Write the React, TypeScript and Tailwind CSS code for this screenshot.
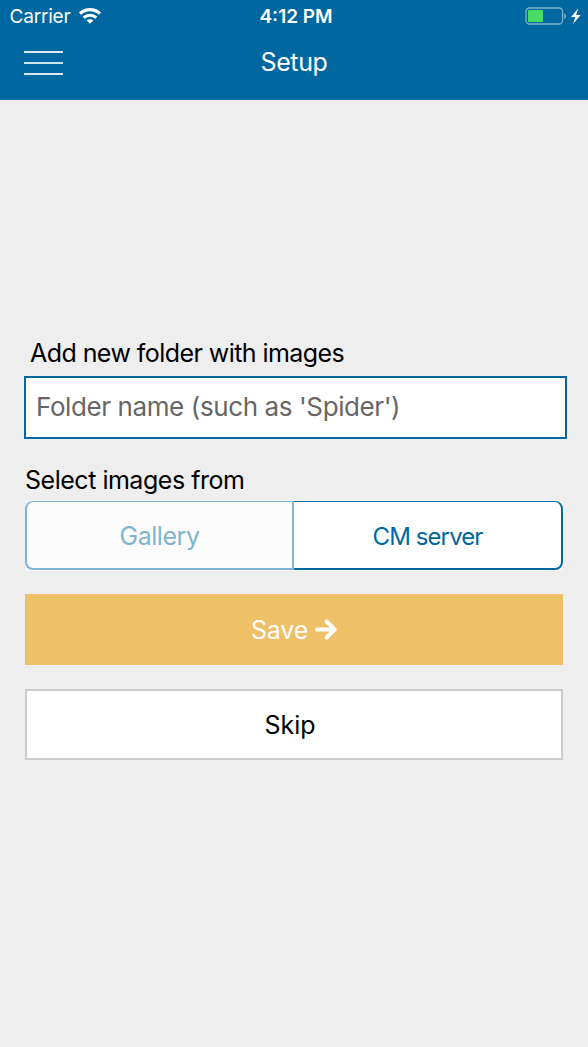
import React from "react";

function WifiIcon() {
  return (
    <svg className="ml-[9px] h-4 w-[22px]" viewBox="0 0 22 16" fill="none" stroke="#fff">
      <path d="M1 5.6C6.7.3 15.3.3 21 5.6" strokeWidth="3.2" />
      <path d="M4.7 9.6c3.6-3.3 9-3.3 12.6 0" strokeWidth="3" />
      <path d="M11 15.8 7.6 12.5c1.9-1.7 4.9-1.7 6.8 0z" fill="#fff" stroke="none" />
    </svg>
  );
}

function ArrowIcon() {
  return (
    <svg
      className="h-[21px] w-[22px]"
      viewBox="0 0 22 21"
      fill="none"
      stroke="#fff"
      strokeWidth="4"
      strokeLinecap="round"
      strokeLinejoin="round"
    >
      <path d="M2 10.5h17.5M11.6 2.4l8 8.1-8 8.1" />
    </svg>
  );
}

function StatusBar() {
  return (
    <div className="grid h-8 grid-cols-3 items-center text-white">
      <div className="flex items-center pl-[9.5px]">
        <span className="pt-0.5 text-[19px] leading-[30px] tracking-[-0.2px]">Carrier</span>
        <WifiIcon />
      </div>
      <div className="pt-0.5 pl-1 text-center text-[19px] font-semibold leading-[30px]">4:12 PM</div>
      <div className="flex items-center justify-end pr-[6px]">
        <svg className="h-[18px] w-[57px]" viewBox="0 0 57 18" fill="none">
          <rect x="1" y="1" width="36.5" height="16" rx="3.5" stroke="#7fb3d0" strokeWidth="1.3" />
          <rect x="3" y="3" width="15" height="12" rx="1" fill="#4cd964" />
          <path d="M39.2 6.2c2.4.8 2.4 4.8 0 5.6z" fill="#7fb3d0" />
          <path d="M53.3 1.2 46.1 10h4.2l-2.2 6.8L55.7 8h-4.5z" fill="#fff" />
        </svg>
      </div>
    </div>
  );
}

export default function App() {
  return (
    <div className="flex h-[1047px] w-[588px] flex-col bg-[#eeeeee] font-['Inter',sans-serif]">
      <header className="h-[100px] bg-[#0067a0]">
        <StatusBar />
        <div className="grid h-[62px] grid-cols-3 items-center text-white">
          <button aria-label="Menu" className="ml-6 flex h-6 w-[39px] flex-col justify-between">
            <span className="h-[2px] w-full bg-white/85" />
            <span className="h-[2px] w-full bg-white/80" />
            <span className="h-[2px] w-full bg-white/85" />
          </button>
          <h1 className="pb-0.5 text-center text-[25px] leading-[60px] tracking-[-0.4px]">Setup</h1>
        </div>
      </header>

      <main className="flex flex-col pt-[236px]">
        <label className="pl-[30px] text-[25px] leading-[34px] tracking-[-0.56px] text-black">
          Add new folder with images
        </label>
        <input
          className="mt-[6px] ml-6 h-[63px] w-[543px] border-2 border-[#0067a0] bg-white pr-[11px] pb-0.5 pl-[10px] text-[26px] tracking-[-0.4px] text-black outline-none placeholder:text-[#666666]"
          placeholder="Folder name (such as 'Spider')"
        />
        <p className="mt-6 ml-[25px] text-[25px] leading-[34px] tracking-[-0.48px] text-black">
          Select images from
        </p>
        <div className="mt-[3px] ml-[25px] flex h-[71px] w-[538px] bg-[#f7f7f7] pt-px pb-px">
          <button className="h-[69px] w-[267px] rounded-l-[8px] border-t border-b-2 border-l-2 border-[#7fb3cf] bg-[#fcfcfc] pt-[3px] text-[25px] tracking-[-0.45px] text-[#7fb3cf]">
            Gallery
          </button>
          <div className="w-[2px] bg-[#7fb3cf]" />
          <button className="h-[69px] w-[269px] rounded-r-[8px] border-t border-r-2 border-b-2 border-[#0067a0] bg-white pt-[3px] text-[24px] tracking-[-0.9px] text-[#0067a0]">
            CM server
          </button>
        </div>
        <button className="mt-[23px] ml-[25px] flex h-[71px] w-[538px] items-center justify-center gap-[7px] bg-[#eec068] text-[25px] text-white">
          <span className="pt-0.5 tracking-[-0.2px]">Save</span>
          <ArrowIcon />
        </button>
        <button className="mt-6 ml-[25px] h-[71px] w-[538px] border-2 border-[#cbcbcb] bg-white pt-0.5 pr-2 text-[25px] text-black">
          Skip
        </button>
      </main>
    </div>
  );
}
